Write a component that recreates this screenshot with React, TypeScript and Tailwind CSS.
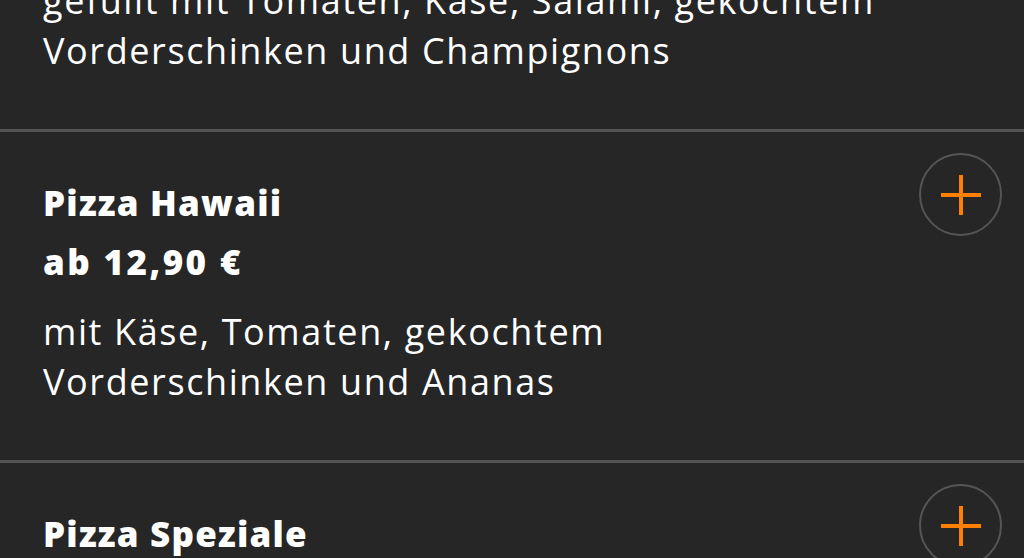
import React from "react";

type Item = { name: string; price: string; lines: string[] };

const items: Item[] = [
  {
    name: "Pizza Mista",
    price: "ab 13,90 €",
    lines: ["gefüllt mit Tomaten, Käse, Salami, gekochtem", "Vorderschinken und Champignons"],
  },
  {
    name: "Pizza Hawaii",
    price: "ab 12,90 €",
    lines: ["mit Käse, Tomaten, gekochtem", "Vorderschinken und Ananas"],
  },
  {
    name: "Pizza Speziale",
    price: "ab 13,50 €",
    lines: ["mit Käse, Tomaten, Salami, Schinken", "und Champignons"],
  },
];

function PlusButton() {
  return (
    <button className="mt-[21px] flex h-[83px] w-[83px] shrink-0 items-center justify-center rounded-full border-2 border-[#555555] bg-transparent">
      <svg width="40" height="40" viewBox="0 0 40 40" shapeRendering="crispEdges">
        <rect x="0" y="18" width="40" height="4" fill="#ff8000" />
        <rect x="18" y="0" width="4" height="40" fill="#ff8000" />
      </svg>
    </button>
  );
}

function MenuItem({ item, last }: { item: Item; last?: boolean }) {
  return (
    <div className={last ? "" : "border-b-[3px] border-[#545454]"}>
      <div className="flex items-start justify-between pl-[43px] pr-[22px]">
        <div className="flex flex-col pt-[51px] pb-[53px]">
          <div className="h-[40px] whitespace-nowrap text-[35px] font-extrabold leading-[40px] tracking-[1.2px] text-white">
            {item.name}
          </div>
          <div className="mt-[19px] h-[40px] whitespace-nowrap text-[35px] font-extrabold leading-[40px] tracking-[2.4px] text-white">
            {item.price}
          </div>
          <div className="mt-[25px] whitespace-nowrap text-[36px] leading-[50px] tracking-[1.6px] text-white">
            {item.lines.map((l, i) => (
              <div key={i}>{l}</div>
            ))}
          </div>
        </div>
        <PlusButton />
      </div>
    </div>
  );
}

export default function App() {
  return (
    <div
      className="h-[558px] w-[1024px] overflow-hidden bg-[#262626]"
      style={{ fontFamily: '"Open Sans", "Noto Sans", sans-serif' }}
    >
      <div className="-mt-[199px]">
        {items.map((it, i) => (
          <MenuItem key={i} item={it} last={i === items.length - 1} />
        ))}
      </div>
    </div>
  );
}
